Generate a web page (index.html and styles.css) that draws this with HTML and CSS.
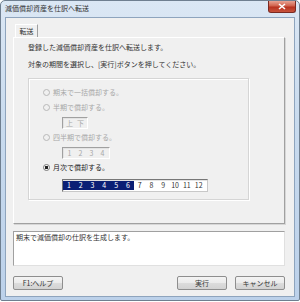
FILE: index.html
```html
<!DOCTYPE html>
<html lang="ja">
<head>
  <meta charset="UTF-8" />
  <title>減価償却資産を仕訳へ転送</title>
  <link rel="stylesheet" href="styles.css">
</head>
<body>
  <div class="window">
    <div class="titlebar">
      <span class="title">減価償却資産を仕訳へ転送</span>
      <span class="close">
        <svg width="8" height="7" viewBox="0 0 8 7"><path d="M1 1 L7 6 M7 1 L1 6" stroke="#fff" stroke-width="1.6"/></svg>
      </span>
    </div>
    <div class="client">
      <div class="tabs"><span class="tab">転送</span></div>
      <div class="panel">
        <p class="msg">登録した減価償却資産を仕訳へ転送します。</p>
        <p class="msg">対象の期間を選択し、[実行]ボタンを押してください。</p>
        <div class="group">
          <div class="opt off first"><span class="radio"></span>期末で一括償却する。</div>
          <div class="opt off"><span class="radio"></span>半期で償却する。</div>
          <div class="cells off"><span>上</span><span>下</span></div>
          <div class="opt off"><span class="radio"></span>四半期で償却する。</div>
          <div class="cells off"><span>1</span><span>2</span><span>3</span><span>4</span></div>
          <div class="opt"><span class="radio on"></span>月次で償却する。</div>
          <div class="cells months">
            <span class="sel">1</span><span class="sel">2</span><span class="sel">3</span><span class="sel">4</span><span class="sel">5</span><span class="sel">6</span><span>7</span><span>8</span><span>9</span><span>10</span><span>11</span><span>12</span>
          </div>
        </div>
      </div>
      <div class="desc">期末で減価償却の仕訳を生成します。</div>
      <div class="buttons">
        <button class="btn">F1:ヘルプ</button>
        <span class="spacer"></span>
        <button class="btn">実行</button>
        <button class="btn">キャンセル</button>
      </div>
    </div>
  </div>
</body>
</html>
```

FILE: styles.css
```css
body {
  margin: 0;
  width: 300px;
  height: 302px;
  overflow: hidden;
  background: #fff;
  font-family: "Noto Sans CJK JP", "Noto Sans", sans-serif;
  font-size: 7px;
  color: #333;
}
.window {
  box-sizing: border-box;
  width: 300px;
  height: 301px;
  border: 1px solid #6f7f90;
  border-radius: 5px 5px 2px 2px;
  background: linear-gradient(180deg, #dbe7f4 0%, #c9dbee 40%, #bcd1ea 100%);
  display: flex;
  flex-direction: column;
}
.titlebar {
  height: 16px;
  display: flex;
  align-items: flex-start;
  padding: 0 3px 0 4px;
}
.title {
  margin-top: 3px;
  line-height: 9px;
  color: #333;
}
.close {
  margin-left: auto;
  width: 26px;
  height: 11px;
  display: flex;
  align-items: center;
  justify-content: center;
  border: 1px solid #7a2a22;
  border-top: none;
  border-radius: 0 0 3px 3px;
  background: linear-gradient(180deg, #e8a393 0%, #d0614c 45%, #b8321f 55%, #c7543d 100%);
}
.client {
  flex: 1;
  margin: 0 4px 3px 4px;
  border: 1px solid #8ea4bd;
  background: #f0f0f0;
  padding: 6px 9px 0 7px;
  display: flex;
  flex-direction: column;
}
.tabs {
  display: flex;
  height: 13px;
  padding-left: 2px;
}
.tab {
  display: block;
  width: 23px;
  height: 13px;
  box-sizing: border-box;
  border-left: 1px solid #fff;
  border-top: 1px solid #fff;
  border-right: 1px solid #a0a0a0;
  background: #f0f0f0;
  text-align: center;
  line-height: 12px;
}
.panel {
  height: 187px;
  box-sizing: border-box;
  border: 1px solid #fff;
  border-right-color: #a0a0a0;
  border-bottom-color: #a0a0a0;
  box-shadow: 1px 1px 0 #d6d6d6;
  padding: 3px 0 0 14px;
}
.msg {
  margin: 0;
  height: 17px;
  line-height: 12px;
}
.group {
  width: 221px;
  height: 122px;
  box-sizing: border-box;
  margin-top: 3px;
  border: 1px solid #d5d5d5;
  box-shadow: inset 1px 1px 0 #fff, 1px 1px 0 #fff;
  padding: 0 0 0 14px;
  display: flex;
  flex-direction: column;
}
.opt {
  height: 12px;
  display: flex;
  align-items: center;
  margin-top: 3px;
  color: #222;
}
.opt.first {
  margin-top: 7px;
}
.opt.off {
  color: #a8a8a8;
}
.radio {
  width: 5px;
  height: 5px;
  border: 1px solid #b8b8b8;
  border-radius: 50%;
  margin-right: 3px;
  background: #f0f0f0;
  box-sizing: content-box;
}
.radio.on {
  border-color: #7a7a7a;
  background: radial-gradient(circle, #222 0 1.4px, #f7f7f7 1.8px);
}
.cells {
  display: flex;
  align-self: flex-start;
  margin: 4px 0 0 19px;
  height: 12px;
  box-sizing: border-box;
  border: 1px solid #fff;
  border-top-color: #a0a0a0;
  border-left-color: #a0a0a0;
  box-shadow: inset 1px 1px 0 #e3e3e3;
  padding: 1px;
  color: #a8a8a8;
}
.cells span {
  width: 11px;
  text-align: center;
  line-height: 8px;
}
.cells + .opt {
  margin-top: 2px;
}
.cells.months {
  margin-top: 6px;
  height: 13px;
  background: #fff;
  color: #333;
  border-color: #777;
  border-right-color: #c8c8c8;
  border-bottom-color: #c8c8c8;
  padding: 1px 2px 1px 0;
}
.cells.months span {
  width: 11.8px;
  line-height: 9px;
}
.cells.months .sel {
  background: #0b1f75;
  color: #fff;
}
.desc {
  margin-top: 7px;
  height: 35px;
  box-sizing: border-box;
  background: #fff;
  border: 1px solid #a0a0a0;
  border-right-color: #e0e0e0;
  border-bottom-color: #e0e0e0;
  padding: 0 2px;
  line-height: 11px;
}
.buttons {
  display: flex;
  margin-top: 10px;
  gap: 8px;
}
.spacer {
  flex: 1;
}
.btn {
  width: 50px;
  height: 14px;
  padding: 0;
  font-family: inherit;
  font-size: 7px;
  color: #333;
  border: 1px solid #8e8e8e;
  border-radius: 2px;
  background: linear-gradient(180deg, #f4f4f4 0%, #ebebeb 48%, #dcdcdc 52%, #d2d2d2 100%);
}
```
